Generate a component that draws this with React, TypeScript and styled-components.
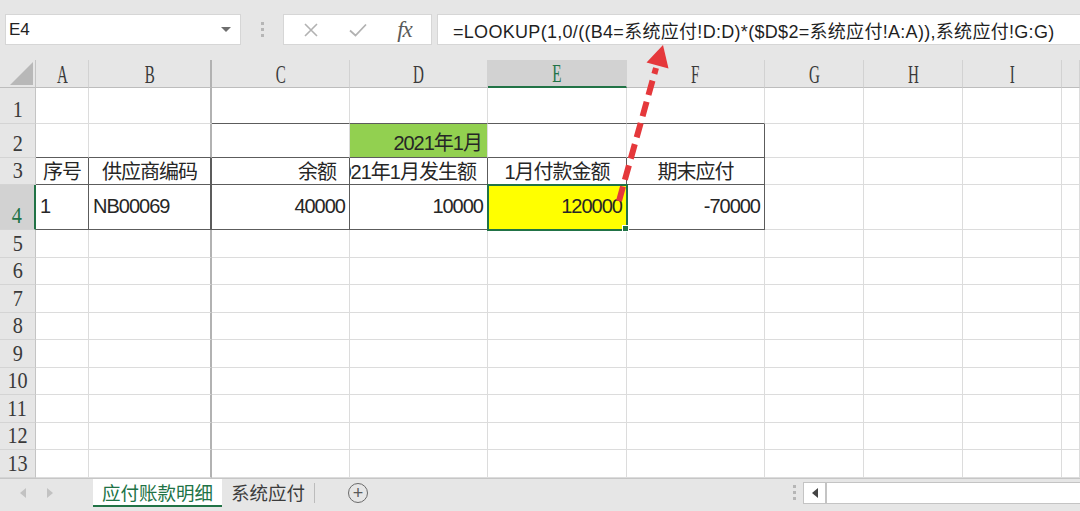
import React from 'react';
import styled, { createGlobalStyle, css } from 'styled-components';

const GlobalStyle = createGlobalStyle`
  html, body {
    margin: 0;
    padding: 0;
    background: #fff;
  }
  body {
    font-family: "Liberation Sans", "Noto Sans CJK SC", sans-serif;
  }
`;

const GREEN = '#217346';
const DARK = '#5c5c5c';
const GRID = '#dcdcdc';
const FROZEN = '#b2b2b2';

const Page = styled.div`
  position: relative;
  width: 1080px;
  height: 511px;
  overflow: hidden;
  display: flex;
  flex-direction: column;
  background: #fff;
`;

/* ---------- formula bar ---------- */

const Toolbar = styled.div`
  flex: none;
  height: 60px;
  box-sizing: border-box;
  display: flex;
  align-items: flex-start;
  padding: 14px 0 0 5px;
  background: #e6e6e6;
`;

const NameBox = styled.div`
  width: 236px;
  height: 31px;
  box-sizing: border-box;
  display: flex;
  align-items: center;
  justify-content: space-between;
  padding: 0 9px 0 3px;
  background: #fff;
  border: 1px solid #d6d6d6;
  font-size: 17px;
  color: #222;
`;

const DropCaret = styled.span`
  width: 0;
  height: 0;
  border-left: 5px solid transparent;
  border-right: 5px solid transparent;
  border-top: 5px solid #6e6e6e;
`;

const Grip = styled.div<{ $width: number }>`
  width: ${(p) => p.$width}px;
  height: 31px;
  display: flex;
  flex-direction: column;
  align-items: center;
  justify-content: center;
  gap: 3px;
`;

const GripDot = styled.span`
  width: 3px;
  height: 3px;
  background: #b6b6b6;
`;

const FxBox = styled.div`
  width: 149px;
  height: 31px;
  box-sizing: border-box;
  display: flex;
  align-items: center;
  padding-left: 3px;
  background: #fff;
  border: 1px solid #d6d6d6;
`;

const FxSlot = styled.span`
  width: 47px;
  display: flex;
  align-items: center;
  justify-content: center;
`;

const FxLabel = styled.span`
  font-family: "Liberation Serif", serif;
  font-style: italic;
  font-size: 23px;
  color: #5a5a5a;
  letter-spacing: -1px;
`;

const FormulaBox = styled.div`
  flex: 1;
  height: 31px;
  margin-left: 5px;
  box-sizing: border-box;
  display: flex;
  align-items: center;
  padding-left: 15px;
  background: #fff;
  border: 1px solid #d6d6d6;
  border-right: none;
  font-size: 18px;
  letter-spacing: 0.3px;
  color: #1f1f1f;
  white-space: nowrap;
  overflow: hidden;
`;

/* ---------- sheet grid ---------- */

const COLS = ['A', 'B', 'C', 'D', 'E', 'F', 'G', 'H', 'I', ''];
const COL_WIDTHS = '36px 53px 123px 138px 138px 139px 138px 99px 99px 99px 1fr';

type CellSpec = {
  text?: string;
  align?: 'flex-start' | 'center' | 'flex-end';
  pad?: number;
  fill?: string;
  right?: boolean;
  bottom?: boolean;
  valign?: 'center' | 'flex-end';
  selected?: boolean;
};

type RowSpec = { num: number; h: number; cells: Record<number, CellSpec> };

const ROWS: RowSpec[] = [
  {
    num: 1,
    h: 36,
    cells: { 2: { bottom: true }, 3: { bottom: true }, 4: { bottom: true }, 5: { bottom: true } },
  },
  {
    num: 2,
    h: 34,
    cells: {
      0: { bottom: true },
      1: { bottom: true },
      2: { bottom: true },
      3: { text: '2021年1月', align: 'flex-end', pad: 5, fill: '#92d050', bottom: true, valign: 'flex-end' },
      4: { bottom: true },
      5: { bottom: true, right: true },
    },
  },
  {
    num: 3,
    h: 27,
    cells: {
      0: { text: '序号', align: 'center', right: true, bottom: true },
      1: { text: '供应商编码', align: 'center', right: true, bottom: true },
      2: { text: '余额', align: 'flex-end', pad: 13, right: true, bottom: true },
      3: { text: '2021年1月发生额', align: 'flex-end', pad: 11, right: true, bottom: true },
      4: { text: '1月付款金额', align: 'center', right: true, bottom: true },
      5: { text: '期末应付', align: 'center', right: true, bottom: true },
    },
  },
  {
    num: 4,
    h: 45,
    cells: {
      0: { text: '1', align: 'flex-start', pad: 4, right: true, bottom: true },
      1: { text: 'NB00069', align: 'flex-start', pad: 4, right: true, bottom: true },
      2: { text: '40000', align: 'flex-end', pad: 4, right: true, bottom: true },
      3: { text: '10000', align: 'flex-end', pad: 4, right: true, bottom: true },
      4: { text: '120000', align: 'flex-end', pad: 4, right: true, bottom: true, fill: '#ffff00', selected: true },
      5: { text: '-70000', align: 'flex-end', pad: 4, right: true, bottom: true },
    },
  },
  ...[5, 6, 7, 8, 9, 10, 11, 12, 13].map((n) => ({ num: n, h: 27.5, cells: {} })),
];

const ACTIVE_COL = 4;
const ACTIVE_ROW = 4;

const Sheet = styled.div`
  flex: none;
  display: grid;
  grid-template-columns: ${COL_WIDTHS};
  grid-template-rows: 28px ${ROWS.map((r) => `${r.h}px`).join(' ')};
  background: #fff;
`;

const Corner = styled.div`
  box-sizing: border-box;
  display: flex;
  align-items: flex-end;
  justify-content: flex-end;
  padding: 0 2px 2px 0;
  background: #e6e6e6;
  border-right: 1px solid #c4c4c4;
  border-bottom: 1px solid #bdbdbd;
`;

const CornerTriangle = styled.span`
  width: 0;
  height: 0;
  border-left: 23px solid transparent;
  border-bottom: 23px solid #b8b8b8;
`;

const ColHead = styled.div<{ $active: boolean; $frozen: boolean }>`
  box-sizing: border-box;
  display: flex;
  align-items: center;
  justify-content: center;
  padding-top: 2px;
  background: ${(p) => (p.$active ? '#d2d2d2' : '#e6e6e6')};
  color: ${(p) => (p.$active ? GREEN : '#3a3a3a')};
  border-right: ${(p) => (p.$frozen ? `2px solid ${FROZEN}` : '1px solid #d2d2d2')};
  border-bottom: ${(p) => (p.$active ? `2px solid ${GREEN}` : '1px solid #bdbdbd')};
  font-family: "Liberation Serif", serif;
  font-size: 26px;
  line-height: 1;
`;

const Letter = styled.span`
  display: inline-block;
  transform: scaleX(0.58);
`;

const RowHead = styled.div<{ $active: boolean }>`
  box-sizing: border-box;
  display: flex;
  align-items: flex-end;
  justify-content: center;
  padding-bottom: 1px;
  background: ${(p) => (p.$active ? '#d2d2d2' : '#e6e6e6')};
  color: ${(p) => (p.$active ? GREEN : '#3a3a3a')};
  border-right: ${(p) => (p.$active ? `2px solid ${GREEN}` : '1px solid #c4c4c4')};
  border-bottom: 1px solid #d4d4d4;
  font-family: "Liberation Serif", serif;
  font-size: 23px;
  line-height: 25px;
`;

const Digits = styled.span`
  display: inline-block;
  transform: scaleX(0.88);
`;

const Cell = styled.div<{
  $align: string;
  $valign: string;
  $pad: number;
  $fill: string;
  $right: string;
  $rightW: number;
  $bottom: string;
  $selected: boolean;
}>`
  position: relative;
  box-sizing: border-box;
  display: flex;
  align-items: ${(p) => p.$valign};
  justify-content: ${(p) => p.$align};
  padding: 0 ${(p) => p.$pad}px 1px;
  background: ${(p) => p.$fill};
  border-right: ${(p) => p.$rightW}px solid ${(p) => p.$right};
  border-bottom: 1px solid ${(p) => p.$bottom};
  overflow: hidden;
  white-space: nowrap;
  font-size: 20px;
  letter-spacing: -1px;
  color: #262626;

  ${(p) =>
    p.$selected &&
    css`
      overflow: visible;
      z-index: 2;
      outline: 2px solid ${GREEN};
      outline-offset: -1px;

      &::after {
        content: '';
        position: absolute;
        right: -3px;
        bottom: -3px;
        width: 5px;
        height: 5px;
        background: ${GREEN};
        border: 1px solid #fff;
      }
    `}
`;

/* ---------- sheet tabs ---------- */

const TabBar = styled.div`
  flex: 1;
  box-sizing: border-box;
  display: flex;
  align-items: stretch;
  padding-bottom: 4px;
  background: #e6e6e6;
  border-top: 1px solid #c6c6c6;
  border-bottom: 1px solid #cfcfcf;
`;

const TabNav = styled.div`
  width: 93px;
  display: flex;
  align-items: center;
  padding-left: 20px;
  box-sizing: border-box;
  gap: 21px;
`;

const NavArrow = styled.span<{ $dir: 'left' | 'right'; $color: string }>`
  width: 0;
  height: 0;
  border-top: 5px solid transparent;
  border-bottom: 5px solid transparent;
  ${(p) =>
    p.$dir === 'left'
      ? css`border-right: 6px solid ${p.$color};`
      : css`border-left: 6px solid ${p.$color};`}
`;

const SheetTab = styled.div<{ $active: boolean }>`
  display: flex;
  align-items: center;
  padding: 0 9px;
  box-sizing: border-box;
  font-size: 18.5px;
  color: ${(p) => (p.$active ? GREEN : '#3c3c3c')};
  background: ${(p) => (p.$active ? '#fff' : 'transparent')};
  border-bottom: 2px solid ${(p) => (p.$active ? GREEN : 'transparent')};
`;

const TabDivider = styled.span`
  align-self: center;
  width: 1px;
  height: 20px;
  background: #bcbcbc;
`;

const AddSheet = styled.div`
  align-self: center;
  margin-left: 33px;
  width: 20px;
  height: 20px;
  box-sizing: border-box;
  border: 1.5px solid #6a6a6a;
  border-radius: 50%;
  display: flex;
  align-items: center;
  justify-content: center;
  font-size: 18px;
  line-height: 1;
  color: #5a5a5a;
`;

const Spacer = styled.div`
  flex: 1;
`;

const TabGrip = styled.div`
  align-self: center;
  width: 14px;
  display: flex;
  flex-direction: column;
  align-items: center;
  gap: 3px;
  margin-right: 2px;
`;

const ScrollBox = styled.div`
  align-self: center;
  width: 277px;
  height: 22px;
  box-sizing: border-box;
  display: flex;
  background: #fff;
  border: 1px solid #c4c4c4;
  border-right: none;
`;

const ScrollButton = styled.div`
  width: 21px;
  display: flex;
  align-items: center;
  justify-content: center;
  border-right: 2px solid #c4c4c4;
`;

/* ---------- overlay arrow ---------- */

const Overlay = styled.svg`
  position: absolute;
  top: 0;
  left: 0;
  pointer-events: none;
  z-index: 10;
`;

function Arrow() {
  return (
    <Overlay width={1080} height={511} viewBox="0 0 1080 511">
      <line
        x1={619}
        y1={201}
        x2={656}
        y2={68}
        stroke="#e5383b"
        strokeWidth={6}
        strokeDasharray="15 7"
      />
      <polygon points="663,45 646.5,62.5 668.5,68.5" fill="#e5383b" />
    </Overlay>
  );
}

function renderCell(row: RowSpec, col: number) {
  const spec = row.cells[col] || {};
  const frozen = col === 1;
  const rightColor = spec.right ? DARK : frozen ? FROZEN : GRID;
  return (
    <Cell
      key={`c-${row.num}-${col}`}
      $align={spec.align || 'flex-start'}
      $valign={spec.valign || 'center'}
      $pad={spec.pad ?? 3}
      $fill={spec.fill || '#fff'}
      $right={rightColor}
      $rightW={frozen ? 2 : 1}
      $bottom={spec.bottom ? DARK : GRID}
      $selected={!!spec.selected}
    >
      {spec.text}
    </Cell>
  );
}

export default function App() {
  return (
    <Page>
      <GlobalStyle />
      <Toolbar>
        <NameBox>
          <span>E4</span>
          <DropCaret />
        </NameBox>
        <Grip $width={42}>
          <GripDot />
          <GripDot />
          <GripDot />
        </Grip>
        <FxBox>
          <FxSlot>
            <svg width="14" height="14" viewBox="0 0 14 14">
              <path d="M1 1L13 13M13 1L1 13" stroke="#b2b2b2" strokeWidth="1.6" fill="none" />
            </svg>
          </FxSlot>
          <FxSlot>
            <svg width="18" height="14" viewBox="0 0 18 14">
              <path d="M1 7.5L6.5 12.5L17 1.5" stroke="#b2b2b2" strokeWidth="1.8" fill="none" />
            </svg>
          </FxSlot>
          <FxSlot>
            <FxLabel>fx</FxLabel>
          </FxSlot>
        </FxBox>
        <FormulaBox>=LOOKUP(1,0/((B4=系统应付!D:D)*($D$2=系统应付!A:A)),系统应付!G:G)</FormulaBox>
      </Toolbar>

      <Sheet>
        <Corner>
          <CornerTriangle />
        </Corner>
        {COLS.map((c, i) => (
          <ColHead key={`h-${i}`} $active={i === ACTIVE_COL} $frozen={i === 1}>
            <Letter>{c}</Letter>
          </ColHead>
        ))}
        {ROWS.map((row) => (
          <React.Fragment key={`r-${row.num}`}>
            <RowHead $active={row.num === ACTIVE_ROW}>
              <Digits>{row.num}</Digits>
            </RowHead>
            {COLS.map((_, col) => renderCell(row, col))}
          </React.Fragment>
        ))}
      </Sheet>

      <TabBar>
        <TabNav>
          <NavArrow $dir="left" $color="#c2c2c2" />
          <NavArrow $dir="right" $color="#c2c2c2" />
        </TabNav>
        <SheetTab $active>应付账款明细</SheetTab>
        <SheetTab $active={false}>系统应付</SheetTab>
        <TabDivider />
        <AddSheet>+</AddSheet>
        <Spacer />
        <TabGrip>
          <GripDot />
          <GripDot />
          <GripDot />
        </TabGrip>
        <ScrollBox>
          <ScrollButton>
            <NavArrow $dir="left" $color="#444" />
          </ScrollButton>
        </ScrollBox>
      </TabBar>

      <Arrow />
    </Page>
  );
}
